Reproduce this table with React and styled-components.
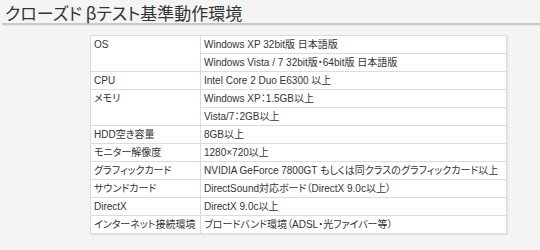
import React from "react";
import styled, { createGlobalStyle } from "styled-components";

const GlobalStyle = createGlobalStyle`
  html, body {
    margin: 0;
    padding: 0;
    background: #f4f4f4;
  }
  body {
    font-family: "Liberation Sans", "Noto Sans CJK JP", sans-serif;
    color: #333;
  }
`;

const specs = [
  { label: "OS", values: ["Windows XP 32bit版 日本語版", "Windows Vista / 7 32bit版・64bit版 日本語版"] },
  { label: "CPU", values: ["Intel Core 2 Duo E6300 以上"] },
  { label: "メモリ", values: ["Windows XP：1.5GB以上", "Vista/7：2GB以上"] },
  { label: "HDD空き容量", values: ["8GB以上"] },
  { label: "モニター解像度", values: ["1280×720以上"] },
  { label: "グラフィックカード", values: ["NVIDIA GeForce 7800GT もしくは同クラスのグラフィックカード以上"] },
  { label: "サウンドカード", values: ["DirectSound対応ボード（DirectX 9.0c以上）"] },
  { label: "DirectX", values: ["DirectX 9.0c以上"] },
  { label: "インターネット接続環境", values: ["ブロードバンド環境（ADSL・光ファイバー等）"] },
];

export default function App() {
  return (
    <Page>
      <GlobalStyle />
      <Title>クローズド βテスト基準動作環境</Title>
      <TableWrap>
        <SpecTable>
          <tbody>
            {specs.map((s) =>
              s.values.map((v, i) => (
                <tr key={s.label + i}>
                  {i === 0 && <Label rowSpan={s.values.length}>{s.label}</Label>}
                  <Value>{v}</Value>
                </tr>
              ))
            )}
          </tbody>
        </SpecTable>
      </TableWrap>
    </Page>
  );
}

const Page = styled.div`
  width: 540px;
  height: 250px;
  overflow: hidden;
`;

const Title = styled.h2`
  margin: 0 0 0 2px;
  padding: 2px 0 0 3px;
  height: 21px;
  font-size: 17px;
  font-weight: normal;
  line-height: 21px;
  color: #333;
  font-family: "Noto Sans CJK JP", sans-serif;
  font-feature-settings: "palt";
  border-bottom: 2px solid #c9c9c9;
  box-shadow: 0 1px 0 #e6e6e6;
`;

const TableWrap = styled.div`
  margin: 10px 0 0 90px;
  width: 417px;
  box-shadow: 1px 1px 2px rgba(0, 0, 0, 0.08);
`;

const SpecTable = styled.table`
  width: 100%;
  border-collapse: collapse;
  background: #fff;
  font-size: 10px;
  font-feature-settings: "palt";
  table-layout: fixed;
`;

const Cell = styled.td`
  border: 1px solid #dcdcdc;
  height: 17px;
  padding: 0 2px 0 3px;
  line-height: 17px;
  vertical-align: middle;
  white-space: nowrap;
  overflow: hidden;
`;

const Label = styled(Cell)`
  width: 104px;
  vertical-align: top;
`;

const Value = styled(Cell)``;
